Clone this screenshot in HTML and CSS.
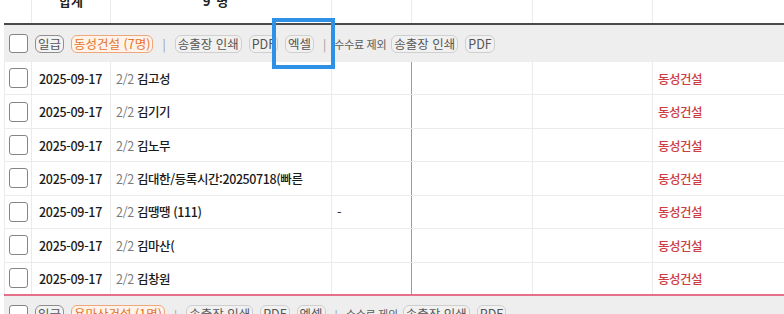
FILE: index.html
```html
<!DOCTYPE html>
<html lang="ko">
<head>
<meta charset="utf-8">
<link rel="stylesheet" href="styles.css">
</head>
<body>
<div class="sheet">
  <div class="cols thead">
    <div class="cell"></div>
    <div class="cell center"><b>합계</b></div>
    <div class="cell center"><b class="shift">9 명</b></div>
    <div class="cell"></div>
    <div class="cell"></div>
    <div class="cell"></div>
    <div class="cell last"></div>
  </div>

  <div class="group">
    <span class="cb"></span>
    <span class="pill dark">일급</span>
    <span class="pill orange">동성건설 (7명)</span>
    <span class="sep">|</span>
    <span class="pill">송출장 인쇄</span>
    <span class="pill">PDF</span>
    <span class="pill">엑셀</span>
    <span class="sep">|</span>
    <span class="note">수수료 제외</span>
    <span class="pill">송출장 인쇄</span>
    <span class="pill">PDF</span>
  </div>

  <div class="cols trow">
    <div class="cell"><span class="cb"></span></div>
    <div class="cell center date">2025-09-17</div>
    <div class="cell name"><span class="cnt">2/2</span><span class="nm">김고성</span></div>
    <div class="cell pad strong"></div>
    <div class="cell"></div>
    <div class="cell"></div>
    <div class="cell last pad"><span class="co">동성건설</span></div>
  </div>
  <div class="cols trow">
    <div class="cell"><span class="cb"></span></div>
    <div class="cell center date">2025-09-17</div>
    <div class="cell name"><span class="cnt">2/2</span><span class="nm">김기기</span></div>
    <div class="cell pad strong"></div>
    <div class="cell"></div>
    <div class="cell"></div>
    <div class="cell last pad"><span class="co">동성건설</span></div>
  </div>
  <div class="cols trow">
    <div class="cell"><span class="cb"></span></div>
    <div class="cell center date">2025-09-17</div>
    <div class="cell name"><span class="cnt">2/2</span><span class="nm">김노무</span></div>
    <div class="cell pad strong"></div>
    <div class="cell"></div>
    <div class="cell"></div>
    <div class="cell last pad"><span class="co">동성건설</span></div>
  </div>
  <div class="cols trow">
    <div class="cell"><span class="cb"></span></div>
    <div class="cell center date">2025-09-17</div>
    <div class="cell name"><span class="cnt">2/2</span><span class="nm">김대한/등록시간:20250718(빠른</span></div>
    <div class="cell pad strong"></div>
    <div class="cell"></div>
    <div class="cell"></div>
    <div class="cell last pad"><span class="co">동성건설</span></div>
  </div>
  <div class="cols trow">
    <div class="cell"><span class="cb"></span></div>
    <div class="cell center date">2025-09-17</div>
    <div class="cell name"><span class="cnt">2/2</span><span class="nm">김땡땡 (111)</span></div>
    <div class="cell pad strong"><span class="dash">-</span></div>
    <div class="cell"></div>
    <div class="cell"></div>
    <div class="cell last pad"><span class="co">동성건설</span></div>
  </div>
  <div class="cols trow">
    <div class="cell"><span class="cb"></span></div>
    <div class="cell center date">2025-09-17</div>
    <div class="cell name"><span class="cnt">2/2</span><span class="nm">김마산(</span></div>
    <div class="cell pad strong"></div>
    <div class="cell"></div>
    <div class="cell"></div>
    <div class="cell last pad"><span class="co">동성건설</span></div>
  </div>
  <div class="cols trow lastrow">
    <div class="cell"><span class="cb"></span></div>
    <div class="cell center date">2025-09-17</div>
    <div class="cell name"><span class="cnt">2/2</span><span class="nm">김창원</span></div>
    <div class="cell pad strong"></div>
    <div class="cell"></div>
    <div class="cell"></div>
    <div class="cell last pad"><span class="co">동성건설</span></div>
  </div>

  <div class="group">
    <span class="cb"></span>
    <span class="pill dark">일급</span>
    <span class="pill orange">용마산건설 (1명)</span>
    <span class="sep">|</span>
    <span class="pill">송출장 인쇄</span>
    <span class="pill">PDF</span>
    <span class="pill">엑셀</span>
    <span class="sep">|</span>
    <span class="note">수수료 제외</span>
    <span class="pill">송출장 인쇄</span>
    <span class="pill">PDF</span>
  </div>

  <div class="highlight"></div>
</div>
</body>
</html>
```

FILE: styles.css
```css
* { box-sizing: border-box; }

body {
  margin: 0;
  background: #ffffff;
  font-family: "Noto Sans CJK KR", "Noto Sans", sans-serif;
  font-weight: 500;
  color: #222222;
  overflow: hidden;
}

.sheet {
  position: relative;
  margin: -22px 0 0 4px;
  width: 800px;
}

.cols {
  display: grid;
  grid-template-columns: 28px 79px 221px 80px 121px 120px 1fr;
}

.cell {
  display: flex;
  align-items: center;
  border-right: 1px solid #ebebeb;
  min-width: 0;
  white-space: nowrap;
  overflow: hidden;
}
.cell.last { border-right: none; }
.cell.center { justify-content: center; }
.cell.pad { padding-left: 5px; }

.thead {
  height: 47px;
  border-bottom: 2px solid #4a4a4a;
  font-size: 13px;
  color: #222;
}
.thead b { font-weight: 700; }
.thead .shift { margin-right: 10px; letter-spacing: 1px; }

.trow {
  height: 33.43px;
  border-bottom: 1px solid #ebebeb;
  box-shadow: inset 1px 0 0 #ebebeb;
  font-size: 12.5px;
}
.trow .cell:first-child { padding-left: 5px; }
.trow.lastrow { border-bottom: 2px solid #e5708a; }

.cell.strong { border-right-color: #9a9a9a; }

.date { letter-spacing: -0.3px; color: #1a1a1a; padding-right: 1px; }

.name { padding-left: 5px; }
.cnt { color: #7a7a7a; margin-right: 3px; letter-spacing: -0.3px; font-weight: 400; }
.nm { color: #1a1a1a; letter-spacing: -0.4px; }

.dash { color: #333; }

.co {
  color: #cc3d42;
  font-size: 12.5px;
  letter-spacing: -0.5px;
}

.cb {
  display: inline-block;
  width: 19px;
  height: 20px;
  border: 1px solid #858585;
  border-radius: 3px;
  background: #fff;
  flex: none;
}

.group {
  display: flex;
  align-items: center;
  gap: 7px;
  height: 37px;
  padding-left: 5px;
  background: #eeeeee;
  font-size: 12.5px;
}
.group .cb { height: 19px; }

.pill {
  display: inline-block;
  padding: 0 2px;
  height: 18px;
  line-height: 15px;
  border: 1px solid #cfcfcf;
  border-radius: 6px;
  background: #f1f1f1;
  color: #555;
  white-space: nowrap;
  font-weight: 400;
}
.pill.dark { border-color: #8f8f8f; color: #555; background: #f3f3f3; }
.pill.orange {
  border-color: #eea77a;
  background: #fff3ea;
  color: #e5732c;
  font-weight: 400;
}

.sep {
  color: #9a9a9a;
  margin: 0 2px;
  font-size: 12px;
  font-weight: 400;
}

.note {
  font-size: 11px;
  color: #5a5a5a;
  letter-spacing: -0.3px;
  margin-left: -1px;
  margin-right: -2px;
  font-weight: 400;
}

.highlight {
  position: absolute;
  left: 268px;
  top: 40px;
  width: 63px;
  height: 51px;
  border: 4px solid #2e91e6;
}
```
